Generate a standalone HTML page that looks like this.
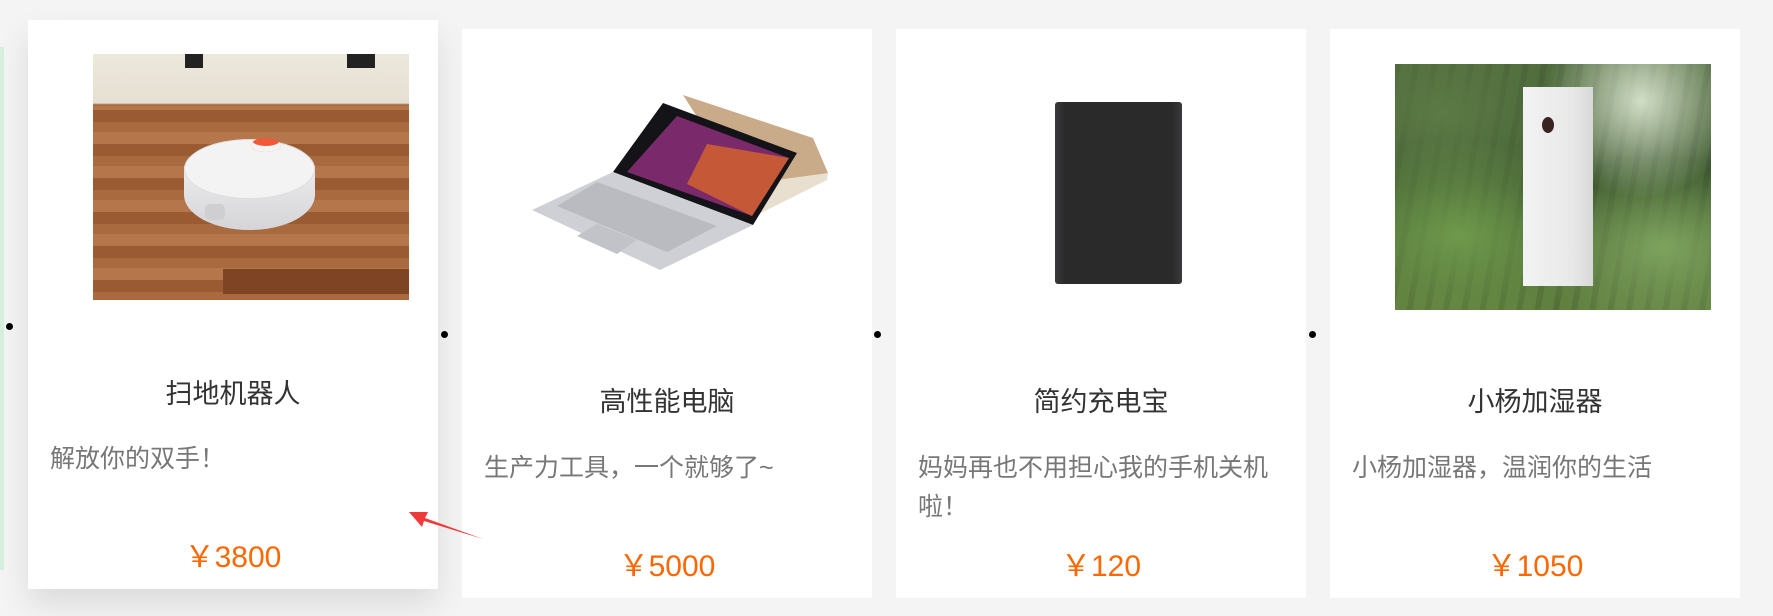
<!DOCTYPE html>
<html><head><meta charset="utf-8"><style>
*{margin:0;padding:0;box-sizing:border-box}
body{width:1773px;height:616px;background:#f4f4f4;position:relative;overflow:hidden;font-family:"Liberation Sans","Noto Sans CJK SC",sans-serif}
.strip{position:absolute;left:0;top:47px;width:4px;height:523px;background:#d6efe0}
.card{position:absolute;width:410px;height:569px;background:#fff;top:29px}
.c1{left:28px;top:20px;box-shadow:0 15px 30px rgba(0,0,0,.1)}
.c2{left:462px}.c3{left:896px}.c4{left:1330px}
.img{position:absolute;left:65px;top:35px;width:316px;height:246px;overflow:hidden}
.t{position:absolute;left:0;width:100%;top:355px;text-align:center;font-size:27px;color:#333;line-height:36px}
.d{position:absolute;left:22px;width:352px;top:420px;font-size:25px;color:#777;line-height:39px}
.p{position:absolute;left:0;width:100%;top:518px;text-align:center;font-size:30px;color:#ff6700;line-height:40px}
.dot{position:absolute;width:7px;height:7px;border-radius:50%;background:#000}
</style></head><body>
<div class="strip"></div>
<div class="dot" style="left:6px;top:323px"></div>
<div class="dot" style="left:441px;top:331px"></div>
<div class="dot" style="left:874px;top:331px"></div>
<div class="dot" style="left:1309px;top:331px"></div>

<div class="card c1">
 <div class="img" style="top:34px;background:
 linear-gradient(#ede8dc 0,#e6e0d3 49px,#9a5c34 51px,transparent 52px),
 repeating-linear-gradient(180deg,#a86a3e 0 10px,#b4764a 10px 22px,#9a5a32 22px 34px),#a4633a">
  <div style="position:absolute;left:92px;top:0;width:18px;height:14px;background:#222"></div>
  <div style="position:absolute;left:254px;top:0;width:28px;height:14px;background:#222"></div>
  <div style="position:absolute;left:130px;top:215px;width:190px;height:25px;background:#7e4424"></div>
  <div style="position:absolute;left:91px;top:112px;width:131px;height:64px;border-radius:0 0 50% 50%/0 0 55% 55%;background:linear-gradient(#ececee,#d5d5d8)"></div>
  <div style="position:absolute;left:91px;top:85px;width:131px;height:60px;border-radius:50%;background:#f3f3f4;border:1px solid #ddd"></div>
  <div style="position:absolute;left:112px;top:150px;width:20px;height:16px;border-radius:5px;background:#cfcfd2"></div>
  <div style="position:absolute;left:158px;top:84px;width:30px;height:14px;border-radius:50%;background:#f05a3a;box-shadow:inset 0 -6px 0 #f4f4f4"></div>
 </div>
 <div class="t" style="top:356px">扫地机器人</div>
 <div class="d">解放你的双手！</div>
 <div class="p" style="top:518px">￥3800</div>
</div>

<div class="card c2">
 <div class="img">
  <svg width="316" height="246" viewBox="0 0 316 246">
   <polygon points="156,31 286,74 301,109 230,146" fill="#c9ab8a"/>
   <polygon points="220,120 301,109 300,116 232,150" fill="#e9dfcf"/>
   <polygon points="136,39 270,89 226,161 86,108" fill="#141418"/>
   <polygon points="150,52 262,94 225,152 100,108" fill="#7a2a6a"/>
   <polygon points="180,80 262,94 225,152 160,120" fill="#d8642a" opacity=".8"/>
   <polygon points="86,108 226,161 133,206 5,146" fill="#cfd0d5"/>
   <polygon points="70,118 190,162 140,188 30,142" fill="#b9bbc1"/>
   <polygon points="70,160 110,176 90,190 50,172" fill="#c2c3c8"/>
  </svg>
 </div>
 <div class="t">高性能电脑</div>
 <div class="d">生产力工具，一个就够了~</div>
 <div class="p">￥5000</div>
</div>

<div class="card c3">
 <div style="position:absolute;left:159px;top:73px;width:127px;height:182px;border-radius:3px;background:linear-gradient(90deg,#3a3a3c,#2a2a2b 8%,#2a2a2b 92%,#3a3a3c)"></div>
 <div class="t">简约充电宝</div>
 <div class="d">妈妈再也不用担心我的手机关机啦！</div>
 <div class="p">￥120</div>
</div>

<div class="card c4">
 <div class="img" style="background:
 radial-gradient(circle at 78% 15%,rgba(225,235,215,.9),transparent 30%),
 radial-gradient(ellipse at 20% 70%,#6f9a4c,transparent 40%),
 radial-gradient(ellipse at 85% 75%,#7ea35e,transparent 35%),
 radial-gradient(ellipse at 15% 20%,#5c7a45,transparent 40%),
 repeating-linear-gradient(100deg,rgba(0,0,0,.12) 0 6px,transparent 6px 18px),
 linear-gradient(#4e6a3c,#3e5a30 50%,#61803f)">
  <div style="position:absolute;left:128px;top:23px;width:70px;height:199px;background:linear-gradient(90deg,#f3f3f3,#e8e8e8 70%,#d8d8d8)"></div>
  <div style="position:absolute;left:147px;top:53px;width:12px;height:16px;border-radius:50%;background:#3a2422"></div>
 </div>
 <div class="t">小杨加湿器</div>
 <div class="d">小杨加湿器，温润你的生活</div>
 <div class="p">￥1050</div>
</div>

<svg style="position:absolute;left:0;top:0" width="1773" height="616">
 <polygon points="409,512 428,512 425,518 483,539 424,521 422,527" fill="#f03a3a"/>
</svg>
</body></html>
